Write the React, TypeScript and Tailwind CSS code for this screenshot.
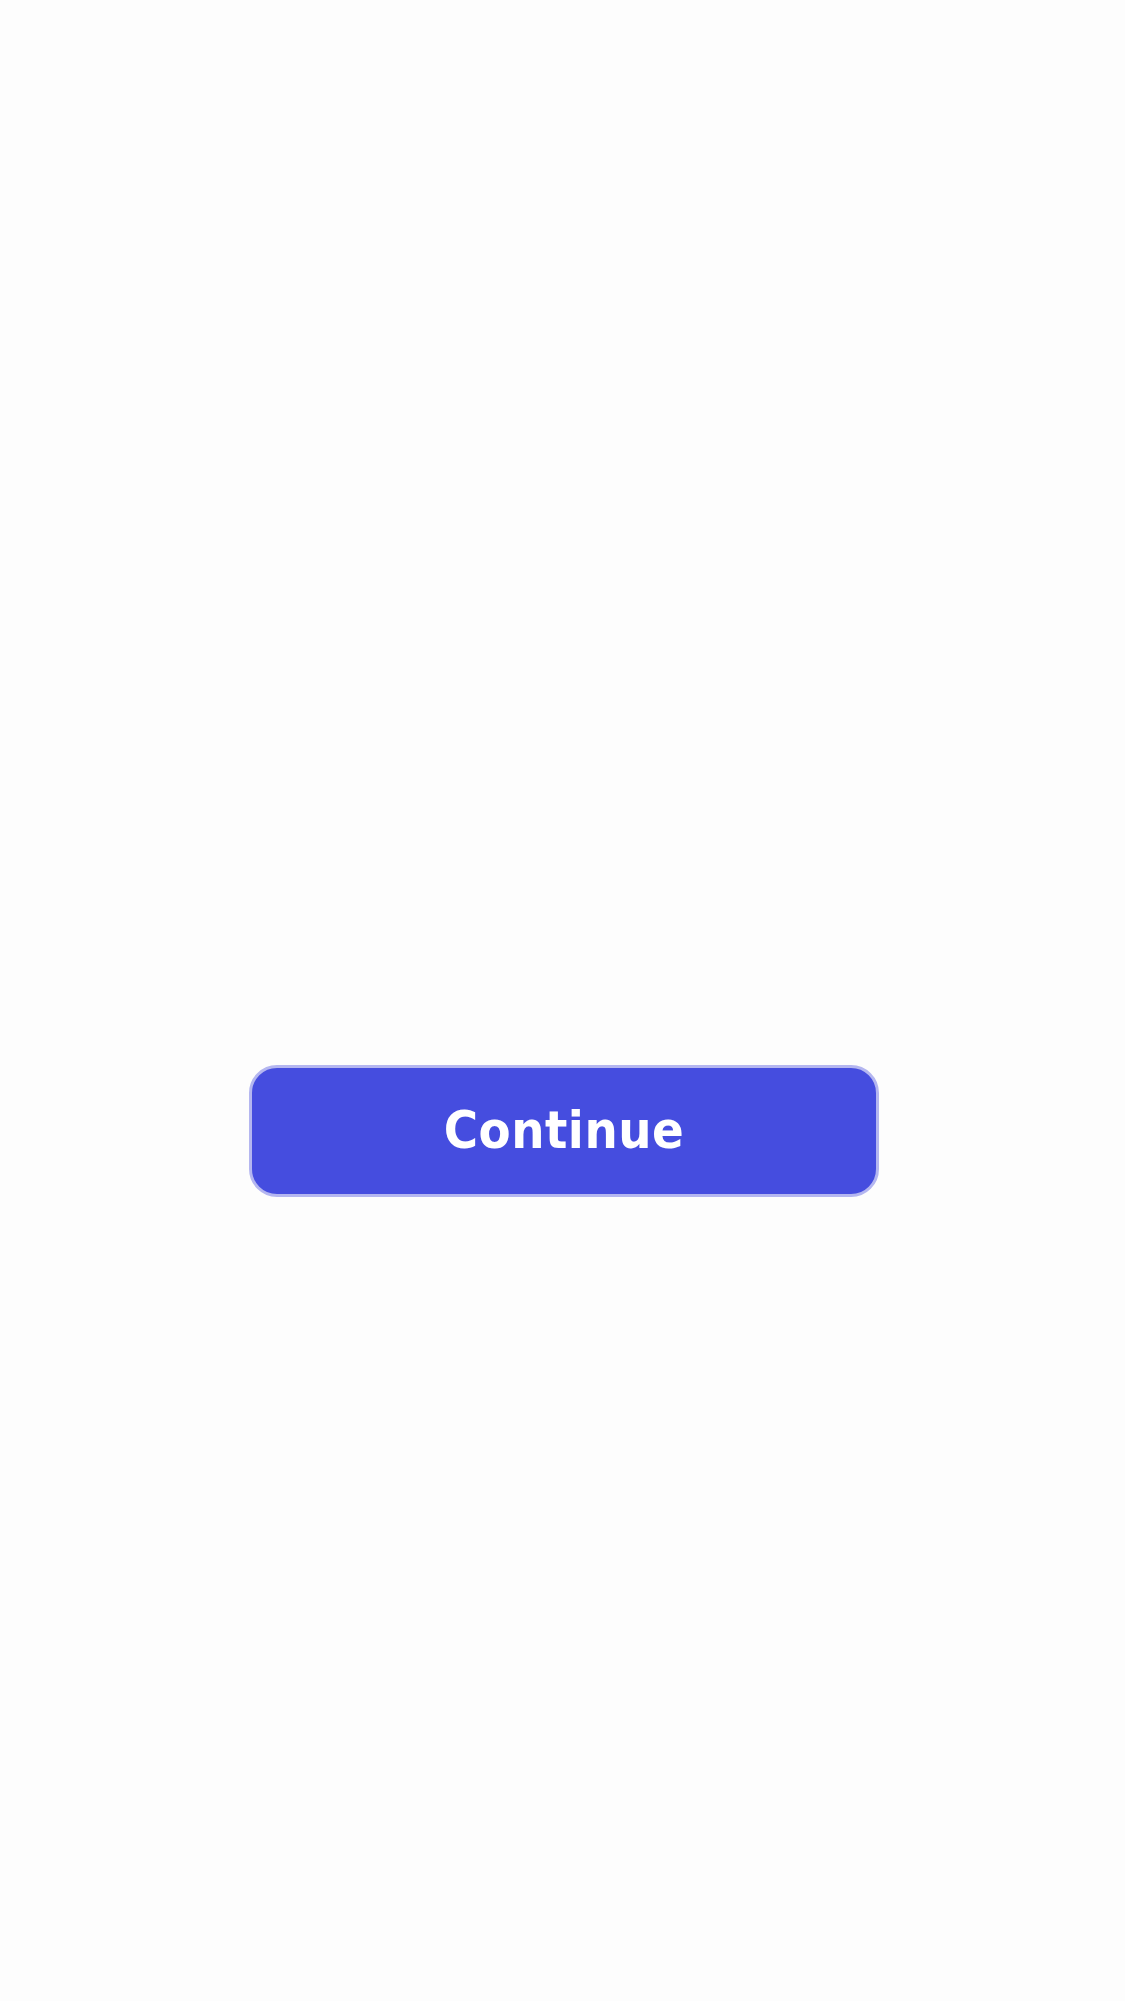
export default function App() {
  return (
    <div className="flex min-h-[2001px] w-full flex-col items-start bg-[#fdfdfd] pl-[249px] pt-[1065px]">
      <button
        type="button"
        className="flex h-[132px] w-[630px] items-center justify-center rounded-[28px] border-[3px] border-[#b4b6f0] bg-[#454ddf] pb-[2px] text-[52px] font-bold tracking-[0.5px] text-white"
        style={{ fontFamily: '"DejaVu Sans Condensed", "DejaVu Sans", sans-serif' }}
      >
        Continue
      </button>
    </div>
  );
}
